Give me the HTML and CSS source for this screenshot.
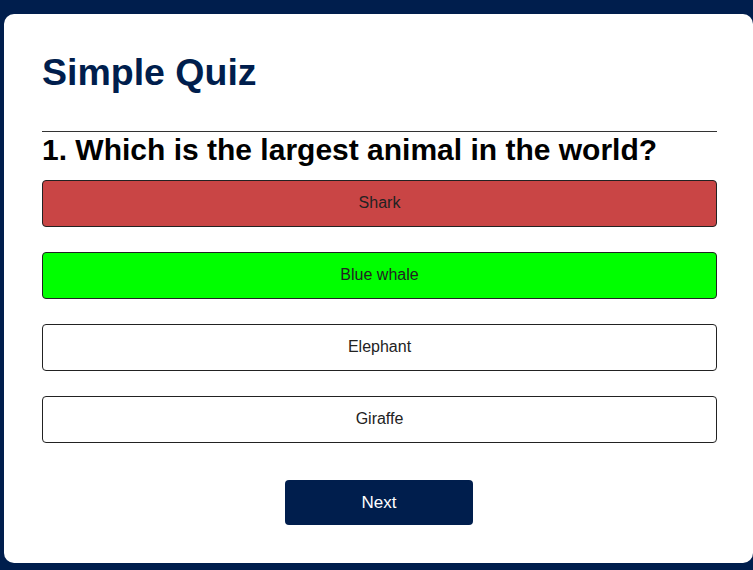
FILE: index.html
```html
<!DOCTYPE html>
<html lang="en">
<head>
<meta charset="utf-8">
<title>Simple Quiz</title>
<link rel="stylesheet" href="styles.css">
</head>
<body>
<div class="app">
  <h1 class="title">Simple Quiz</h1>
  <div class="quiz">
    <h2 class="question">1. Which is the largest animal in the world?</h2>
    <div class="answers">
      <button class="btn incorrect">Shark</button>
      <button class="btn correct">Blue whale</button>
      <button class="btn">Elephant</button>
      <button class="btn">Giraffe</button>
    </div>
    <button class="next-btn">Next</button>
  </div>
</div>
</body>
</html>
```
FILE: styles.css
```css
* { box-sizing: border-box; }
html, body { margin: 0; padding: 0; }
body {
  background: #001e4d;
  font-family: "Liberation Sans", Arial, sans-serif;
  height: 570px;
  overflow: hidden;
}
.app {
  background: #fff;
  width: 749px;
  margin: 14px 0 0 4px;
  border-radius: 10px;
  padding: 38px 36px 38px 38px;
}
.title {
  margin: 0;
  font-size: 37.5px;
  line-height: 41px;
  font-weight: 700;
  color: #001e4d;
  padding-bottom: 38px;
  border-bottom: 1px solid #333;
}
.question {
  margin: 0;
  font-size: 30px;
  line-height: 35px;
  font-weight: 700;
  color: #000;
}
.answers {
  margin-top: 13px;
  display: flex;
  flex-direction: column;
  gap: 25px;
}
.btn {
  display: block;
  width: 100%;
  background: #fff;
  color: #222;
  font-family: "Liberation Sans", Arial, sans-serif;
  font-size: 16px;
  line-height: 18px;
  padding: 13px 0 14px;
  border: 1px solid #222;
  border-radius: 4px;
  text-align: center;
}
.btn.incorrect { background: #c94545; }
.btn.correct { background: #00ff00; }
.next-btn {
  display: block;
  margin: 37px 0 0 243px;
  width: 188px;
  height: 45px;
  background: #001e4d;
  color: #fff;
  border: 0;
  border-radius: 4px;
  font-family: "Liberation Sans", Arial, sans-serif;
  font-size: 17px;
  padding: 0;
}
```
